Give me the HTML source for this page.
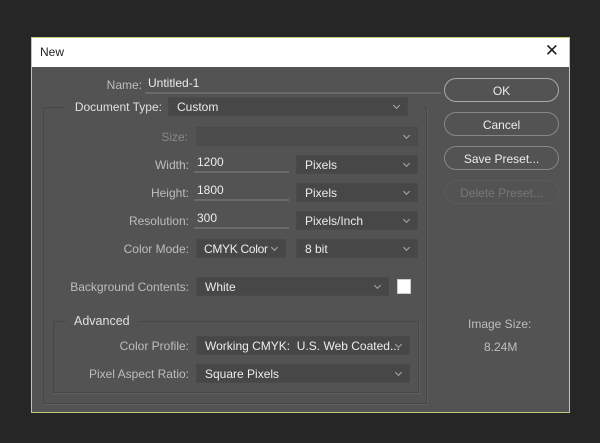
<!DOCTYPE html>
<html><head><style>
*{margin:0;padding:0;box-sizing:border-box}
body{width:600px;height:443px;background:#262626;position:relative;overflow:hidden;font-family:"Liberation Sans",sans-serif;font-size:12px;color:#e6e6e6}
.dlg{position:absolute;left:31px;top:37px;width:539px;height:376px;background:#535353;border:1px solid #c8cc7a}
.title{position:absolute;left:0;top:0;width:537px;height:29px;background:#fff;color:#222;font-size:12px;padding:7px 0 0 8px}
.x{position:absolute;right:10px;top:3px;font-size:17px;color:#222}
.a{position:absolute}
.lbl{position:absolute;color:#bdbdbd;text-align:right}
.dd{position:absolute;background:#474747;border:1px solid #4a4a4a;padding:2px 0 0 8px;color:#ececec;height:19px;overflow:hidden}
.dd:after{content:"";position:absolute;right:8px;top:5px;width:4px;height:4px;border-right:1px solid #aaa;border-bottom:1px solid #aaa;transform:rotate(45deg)}
.inp{position:absolute;border-bottom:2px solid #6a6a6a;color:#ececec;padding-left:3px;height:18px}
.box{position:absolute;border:1px solid #474747;box-shadow:1px 1px 0 #5e5e5e}
.btn{position:absolute;left:412px;width:115px;height:24px;border:1px solid #878787;border-radius:12px;text-align:center;padding-top:5px;color:#ececec}
</style></head><body>
<div class="dlg">
<div class="title">New<span class="x">✕</span></div>
<div class="box" style="left:11px;top:69px;width:384px;height:297px"></div>
<div class="box" style="left:21px;top:283px;width:366px;height:72px;background:#535353"></div>
<div class="a" style="left:32px;top:60px;width:360px;height:22px;background:#535353"></div>
<div class="lbl" style="left:0;top:40px;width:110px">Name:</div>
<div class="inp" style="left:113px;top:38px;width:296px">Untitled-1</div>
<div class="lbl" style="left:32px;top:62px;width:98px;color:#e0e0e0">Document Type:</div>
<div class="dd" style="left:136px;top:59px;width:240px">Custom</div>
<div class="lbl" style="left:0;top:92px;width:156px;color:#888">Size:</div>
<div class="dd" style="left:164px;top:89px;width:222px;background:#4c4c4c"></div>
<div class="lbl" style="left:0;top:120px;width:157px">Width:</div>
<div class="inp" style="left:162px;top:117px;width:95px">1200</div>
<div class="dd" style="left:264px;top:117px;width:122px">Pixels</div>
<div class="lbl" style="left:0;top:148px;width:157px">Height:</div>
<div class="inp" style="left:162px;top:145px;width:95px">1800</div>
<div class="dd" style="left:264px;top:145px;width:122px">Pixels</div>
<div class="lbl" style="left:0;top:176px;width:157px">Resolution:</div>
<div class="inp" style="left:162px;top:173px;width:95px">300</div>
<div class="dd" style="left:264px;top:173px;width:122px">Pixels/Inch</div>
<div class="lbl" style="left:0;top:204px;width:157px">Color Mode:</div>
<div class="dd" style="left:164px;top:201px;width:90px;padding-left:7px;letter-spacing:-0.3px">CMYK Color</div>
<div class="dd" style="left:264px;top:201px;width:122px">8 bit</div>
<div class="lbl" style="left:0;top:242px;width:157px">Background Contents:</div>
<div class="dd" style="left:164px;top:239px;width:193px">White</div>
<div class="a" style="left:365px;top:241px;width:14px;height:15px;background:#fff;border:1px solid #ccc"></div>
<div class="a" style="left:34px;top:276px;padding:0 8px;background:#535353;color:#e0e0e0;font-size:12.5px">Advanced</div>
<div class="lbl" style="left:0;top:301px;width:157px">Color Profile:</div>
<div class="dd" style="left:164px;top:298px;width:214px;padding-right:18px;white-space:nowrap">Working CMYK:&nbsp; U.S. Web Coated...</div>
<div class="lbl" style="left:0;top:329px;width:157px">Pixel Aspect Ratio:</div>
<div class="dd" style="left:164px;top:326px;width:214px">Square Pixels</div>
<div class="btn" style="top:40px;border-color:#aaa">OK</div>
<div class="btn" style="top:74px">Cancel</div>
<div class="btn" style="top:108px">Save Preset...</div>
<div class="btn" style="top:142px;border-color:#5a5a5a;color:#777">Delete Preset...</div>
<div class="lbl" style="left:436px;top:279px;color:#bdbdbd">Image Size:</div>
<div class="lbl" style="left:452px;top:302px;color:#bdbdbd">8.24M</div>
</div>
</body></html>
